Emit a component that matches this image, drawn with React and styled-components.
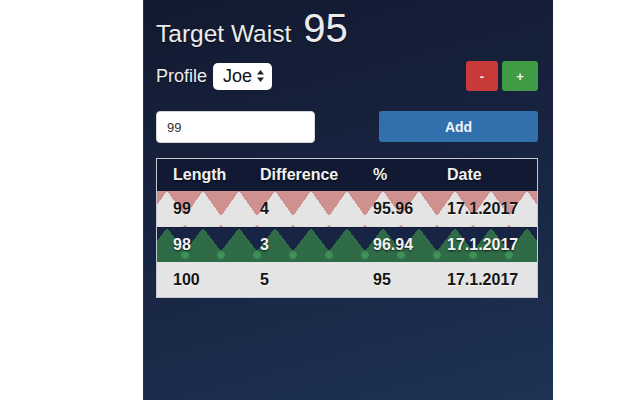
import React from "react";
import styled, { createGlobalStyle } from "styled-components";

const Global = createGlobalStyle`
  html, body {
    margin: 0;
    padding: 0;
    background: #ffffff;
    font-family: "Liberation Sans", Arial, sans-serif;
  }
`;

const Page = styled.div`
  width: 640px;
  height: 400px;
  overflow: hidden;
  background: #ffffff;
`;

const Panel = styled.div`
  margin-left: 143px;
  width: 410px;
  height: 400px;
  box-sizing: border-box;
  padding: 0 15px 0 12px;
  background: linear-gradient(165deg, #121a30 0%, #172340 45%, #1e3253 100%);
  border-left: 1px solid #2a3350;
`;

const Title = styled.h1`
  margin: 0;
  padding-top: 6px;
  display: flex;
  align-items: baseline;
  gap: 12px;
  color: #ececec;
  font-weight: normal;
  text-shadow: 0 1px 1px rgba(0, 0, 0, 0.6);
`;

const Label = styled.span`
  font-size: 24.5px;
`;

const Big = styled.span`
  font-size: 40px;
`;

const ProfileRow = styled.div`
  display: flex;
  align-items: center;
  justify-content: space-between;
  margin-top: 10px;
  height: 30px;
`;

const ProfileLeft = styled.div`
  display: flex;
  align-items: center;
  gap: 6px;
  color: #ececec;
  font-size: 18px;
  text-shadow: 0 1px 1px rgba(0, 0, 0, 0.6);
`;

const Select = styled.div`
  display: flex;
  align-items: center;
  gap: 4px;
  height: 27px;
  padding: 0 7px 0 10px;
  box-sizing: border-box;
  background: #ffffff;
  border-radius: 5px;
  color: #111;
  font-size: 18px;
  text-shadow: none;
`;

const Buttons = styled.div`
  display: flex;
  gap: 4px;
`;

const SmallButton = styled.button`
  width: ${(p) => p.$w}px;
  height: 30px;
  border: none;
  border-radius: 3px;
  background: ${(p) => p.$bg};
  color: #f4f4f4;
  font-family: "Liberation Sans", Arial, sans-serif;
  font-weight: bold;
  font-size: 13px;
  padding: 0;
`;

const AddRow = styled.div`
  display: flex;
  justify-content: space-between;
  margin-top: 20px;
`;

const Input = styled.input`
  width: 159px;
  height: 32px;
  box-sizing: border-box;
  border: 1px solid #d6d6d6;
  border-radius: 4px;
  padding: 0 10px;
  font-family: "Liberation Sans", Arial, sans-serif;
  font-size: 13px;
  color: #333;
  background: #fff;
  outline: none;
`;

const AddButton = styled.button`
  width: 159px;
  height: 31px;
  border: none;
  border-radius: 3px;
  background: #3170ad;
  color: #eef2f8;
  font-family: "Liberation Sans", Arial, sans-serif;
  font-weight: bold;
  font-size: 14px;
`;

const Table = styled.div`
  margin-top: 15px;
  border: 1px solid #c4c8d0;
`;

const Row = styled.div`
  display: grid;
  grid-template-columns: 87px 113px 74px 1fr;
  align-items: center;
  height: ${(p) => p.$h}px;
  font-weight: bold;
  font-size: 16px;
  color: ${(p) => (p.$light ? "#f2f2f2" : "#151515")};
  text-shadow: ${(p) =>
    p.$light ? "0 1px 2px rgba(0,0,0,0.7)" : "0 1px 1px rgba(255,255,255,0.8)"};
  border-top: ${(p) => (p.$line ? "1px solid #141c30" : "none")};
  background: ${(p) => p.$bg};
`;

const Cell = styled.div`
  padding-left: 16px;
`;

const pink = "#cf9190";
const gray = "#e4e4e4";
const navy = "#172443";
const green = "#2e6b46";

// saw-tooth patterns, tiles 36px wide
const pinkRow = `
  radial-gradient(circle, #d49a99 1.5px, transparent 2px) 10px 33px / 36px 6px repeat-x,
  linear-gradient(to bottom right, ${pink} 25%, transparent 25%) 28px 0 / 36px 50px repeat-x,
  linear-gradient(to bottom left, ${pink} 25%, transparent 25%) 28px 0 / 36px 50px repeat-x,
  ${gray}
`;

const greenRow = `
  radial-gradient(circle, #3d9156 3.5px, transparent 4px) 10px 22px / 36px 10px repeat-x,
  linear-gradient(to bottom right, ${navy} 25%, transparent 25%) 28px 0 / 36px 46px repeat-x,
  linear-gradient(to bottom left, ${navy} 25%, transparent 25%) 28px 0 / 36px 46px repeat-x,
  ${green}
`;

const rows = [
  { v: ["99", "4", "95.96", "17.1.2017"], bg: pinkRow, h: 36 },
  { v: ["98", "3", "96.94", "17.1.2017"], bg: greenRow, h: 34, light: true, line: true },
  { v: ["100", "5", "95", "17.1.2017"], bg: gray, h: 35 },
];

function Arrows() {
  return (
    <svg width="9" height="14" viewBox="0 0 9 14">
      <path d="M4.5 1 L8 5.5 H1 Z" fill="#222" />
      <path d="M4.5 13 L8 8.5 H1 Z" fill="#222" />
    </svg>
  );
}

export default function App() {
  return (
    <Page>
      <Global />
      <Panel>
        <Title>
          <Label>Target Waist</Label>
          <Big>95</Big>
        </Title>
        <ProfileRow>
          <ProfileLeft>
            Profile
            <Select>
              Joe
              <Arrows />
            </Select>
          </ProfileLeft>
          <Buttons>
            <SmallButton $w={32} $bg="#c83a37">-</SmallButton>
            <SmallButton $w={36} $bg="#419b45">+</SmallButton>
          </Buttons>
        </ProfileRow>
        <AddRow>
          <Input defaultValue="99" />
          <AddButton>Add</AddButton>
        </AddRow>
        <Table>
          <Row $h={32} $bg="#121a33" $light>
            <Cell>Length</Cell>
            <Cell>Difference</Cell>
            <Cell>%</Cell>
            <Cell>Date</Cell>
          </Row>
          {rows.map((r, i) => (
            <Row key={i} $h={r.h} $bg={r.bg} $light={r.light} $line={r.line}>
              {r.v.map((c, j) => (
                <Cell key={j}>{c}</Cell>
              ))}
            </Row>
          ))}
        </Table>
      </Panel>
    </Page>
  );
}
